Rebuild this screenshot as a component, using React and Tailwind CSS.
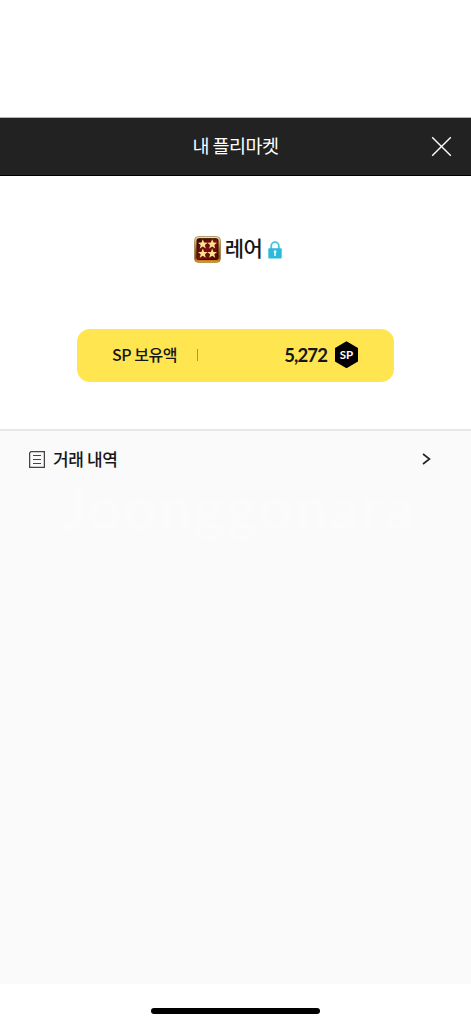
const star = "M0,-5 1.3,-1.7 4.8,-1.5 2.1,0.7 3,4.1 0,2.2 -3,4.1 -2.1,0.7 -4.8,-1.5 -1.3,-1.7Z";

function RankBadge() {
  return (
    <svg width="27" height="27" viewBox="0 0 27 27">
      <defs>
        <linearGradient id="frame" x1="0" y1="0" x2="0" y2="1">
          <stop offset="0" stopColor="#f2eaa6" />
          <stop offset="0.45" stopColor="#a9792e" />
          <stop offset="0.8" stopColor="#8a4a0c" />
          <stop offset="1" stopColor="#eba51f" />
        </linearGradient>
        <linearGradient id="plate" x1="0" y1="0" x2="1" y2="1">
          <stop offset="0" stopColor="#380908" />
          <stop offset="0.5" stopColor="#7c1013" />
          <stop offset="1" stopColor="#4a0808" />
        </linearGradient>
      </defs>
      <rect x="0.5" y="0.5" width="26" height="26" rx="4" fill="url(#frame)" stroke="#a17a3d" strokeWidth="0.7" />
      <rect x="3" y="2.7" width="21" height="20.8" rx="1.5" fill="url(#plate)" stroke="#351006" strokeWidth="1" />
      {[[8.8, 8.3], [18.2, 8.3], [8.8, 17.6], [18.2, 17.6]].map(([x, y]) => (
        <path key={`${x}-${y}`} d={star} transform={`translate(${x} ${y})`} fill="#ffe38a" />
      ))}
    </svg>
  );
}

function Header() {
  return (
    <header className="grid h-[59px] grid-cols-[50px_1fr_50px] items-center border-t border-b border-t-[#b5b3b6] border-b-black bg-[#222222]">
      <span />
      <h1 className="pb-[3px] text-center text-[18.5px] leading-[28px] tracking-[-0.5px] whitespace-nowrap text-white">내 플리마켓</h1>
      <button aria-label="닫기" className="flex pl-[10px]">
        <svg width="21" height="21" viewBox="0 0 21 21" fill="none" stroke="white" strokeWidth="1.4">
          <path d="M1.2 1.2 19.8 19.8M19.8 1.2 1.2 19.8" />
        </svg>
      </button>
    </header>
  );
}

export default function App() {
  return (
    <div className="flex h-[1024px] w-[471px] flex-col bg-white pt-[117px] font-['Noto_Sans_CJK_KR',sans-serif] text-[#161616]">
      <Header />
      <section className="flex h-[253px] flex-col items-center pt-[57px]">
        <div className="flex h-[32px] items-center pl-[5px]">
          <RankBadge />
          <span className="ml-[4px] pb-[4px] text-[21px] leading-[32px] font-medium tracking-[-0.6px]">레어</span>
          <svg className="mt-px ml-[6px]" width="14" height="18" viewBox="0 0 14 18">
            <path d="M3.2 8V5a3.8 3.8 0 0 1 7.6 0v3" fill="none" stroke="#46c5df" strokeWidth="1.8" />
            <rect x="0.3" y="7.2" width="13.4" height="10.3" rx="1" fill="#2bbbd9" />
            <path d="M5.7 10.7a1.4 1.4 0 1 1 2 1.2v3.1H6.3v-3.1a1.4 1.4 0 0 1-.6-1.2Z" fill="white" />
          </svg>
        </div>
        <div className="mt-[63.5px] flex h-[53.5px] w-[317px] items-center rounded-[13px] bg-[#ffe650] pr-[36px] pl-[35px]">
          <span className="pb-[2px] text-[16px] leading-[24px] font-medium tracking-[-0.5px] whitespace-nowrap">SP 보유액</span>
          <span className="ml-[20px] h-[12px] w-px bg-[#a99a42]" />
          <strong className="ml-auto font-['Lato',sans-serif] text-[18.5px] leading-[24px] font-bold tracking-[-0.9px]">5,272</strong>
          <span className="mb-px ml-[8px] grid h-[27px] w-[23px] place-items-center bg-black pb-px font-['Lato',sans-serif] text-[11.5px] font-bold text-white [clip-path:polygon(50%_0,100%_25%,100%_75%,50%_100%,0_75%,0_25%)]">SP</span>
        </div>
      </section>
      <main className="h-[555px] border-t-2 border-[#e7e7e7] bg-[#fafafa]">
        <button className="flex h-[56px] w-full items-center pr-[40px] pl-[29px]">
          <svg width="16" height="17" viewBox="0 0 16 17" fill="none" stroke="#444444">
            <path d="M2 .6H15.4V16.4H.6V2Z" strokeWidth="1.3" />
            <path d="M4 4.5h8M4 8.5h8M4 12.5h8" strokeWidth="1.2" />
          </svg>
          <span className="ml-[8px] pb-px text-[17px] leading-[26px] font-medium tracking-[-0.4px]">거래 내역</span>
          <svg className="ml-auto" width="9" height="12" viewBox="0 0 9 12" fill="none" stroke="#222222" strokeWidth="1.6">
            <path d="m1 1 6.5 5L1 11" />
          </svg>
        </button>
        <div className="-mt-[10px] pl-[61px] font-['Lato',sans-serif] text-[60px] leading-[60px] font-bold tracking-[1.2px] text-[#fbfbfb] select-none">Joonggonara</div>
      </main>
      <footer className="flex h-[39px] justify-center pt-[24px]">
        <span className="h-[6px] w-[169px] rounded-full bg-black" />
      </footer>
    </div>
  );
}
